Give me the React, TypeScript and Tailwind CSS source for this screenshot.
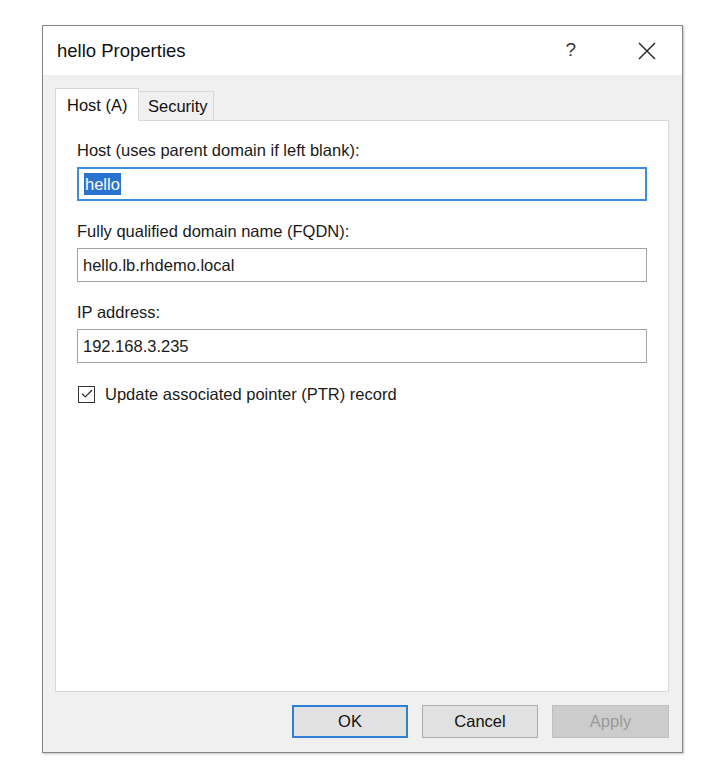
import { Check } from "lucide-react"

const FONT = { fontFamily: '"Liberation Sans", Arial, sans-serif' }

function Field({ label, value, focused }: { label: string; value: string; focused?: boolean }) {
  return (
    <div className="flex flex-col">
      <div className="h-[20px] leading-[20px] text-[16.5px] text-[#1a1a1a]">{label}</div>
      <div
        className={`mt-[7px] h-[34px] flex items-center px-[5px] bg-white border ${
          focused ? "border-[#3c8ddc] border-2 px-[4px]" : "border-[#a3a3a3]"
        }`}
      >
        {focused ? (
          <span className="bg-[#2a72d0] text-white text-[16.5px] leading-[22px] px-px">{value}</span>
        ) : (
          <span className="text-[16.5px] text-[#1a1a1a]">{value}</span>
        )}
      </div>
    </div>
  )
}

export default function App() {
  return (
    <div className="w-[714px] h-[784px] bg-white pt-[25px] pl-[42px]" style={FONT}>
      <div className="w-[641px] h-[728px] flex flex-col border border-[#858585] shadow-[1px_1px_2px_rgba(0,0,0,0.25)]">
        {/* Title bar */}
        <div className="h-[49px] bg-white flex items-center pl-[14px] pr-[26px]">
          <div className="text-[18.5px] text-[#111] flex-1">hello Properties</div>
          <div className="text-[19px] text-[#333] mr-[62px]">?</div>
          <svg width="18" height="18" viewBox="0 0 18 18" className="text-[#222]">
            <path d="M1 1 L17 17 M17 1 L1 17" stroke="currentColor" strokeWidth="1.4" fill="none" />
          </svg>
        </div>

        {/* Body */}
        <div className="flex-1 bg-[#f0f0f0] flex flex-col pl-[12px] pr-[12px] pt-[13px]">
          {/* Tabs */}
          <div className="h-[32px] flex items-end">
            <div className="relative z-10 -mb-px h-[33px] w-[84px] bg-white border border-b-0 border-[#d9d9d9] flex items-center pl-[11px] text-[16.5px] text-[#111]">
              Host (A)
            </div>
            <div className="h-[29px] w-[75px] border border-l-0 border-b-0 border-[#d9d9d9] flex items-center pl-[9px] text-[16.5px] text-[#111]">
              Security
            </div>
          </div>

          {/* Panel */}
          <div className="w-[614px] h-[572px] bg-white border border-[#d9d9d9] px-[21px] pt-[19px] flex flex-col gap-[20px]">
            <Field label="Host (uses parent domain if left blank):" value="hello" focused />
            <Field label="Fully qualified domain name (FQDN):" value="hello.lb.rhdemo.local" />
            <Field label="IP address:" value="192.168.3.235" />
            <div className="flex items-center gap-[10px] -mt-[1px] pl-px">
              <div className="w-[17px] h-[17px] border border-[#333] bg-white flex items-center justify-center">
                <Check className="w-[14px] h-[14px] text-[#222]" strokeWidth={2} />
              </div>
              <span className="text-[16.5px] text-[#1a1a1a]">Update associated pointer (PTR) record</span>
            </div>
          </div>

          {/* Buttons */}
          <div className="flex justify-end gap-[14px] mt-[13px] pr-0 w-[614px]">
            <button className="w-[116px] h-[33px] bg-[#e1e1e1] border-2 border-[#2f7fd6] text-[16.5px] text-[#111]">
              OK
            </button>
            <button className="w-[116px] h-[33px] bg-[#e1e1e1] border border-[#adadad] text-[16.5px] text-[#111]">
              Cancel
            </button>
            <button className="w-[117px] h-[33px] bg-[#cccccc] border border-[#bfbfbf] text-[16.5px] text-[#9a9a9a]">
              Apply
            </button>
          </div>
        </div>
      </div>
    </div>
  )
}
